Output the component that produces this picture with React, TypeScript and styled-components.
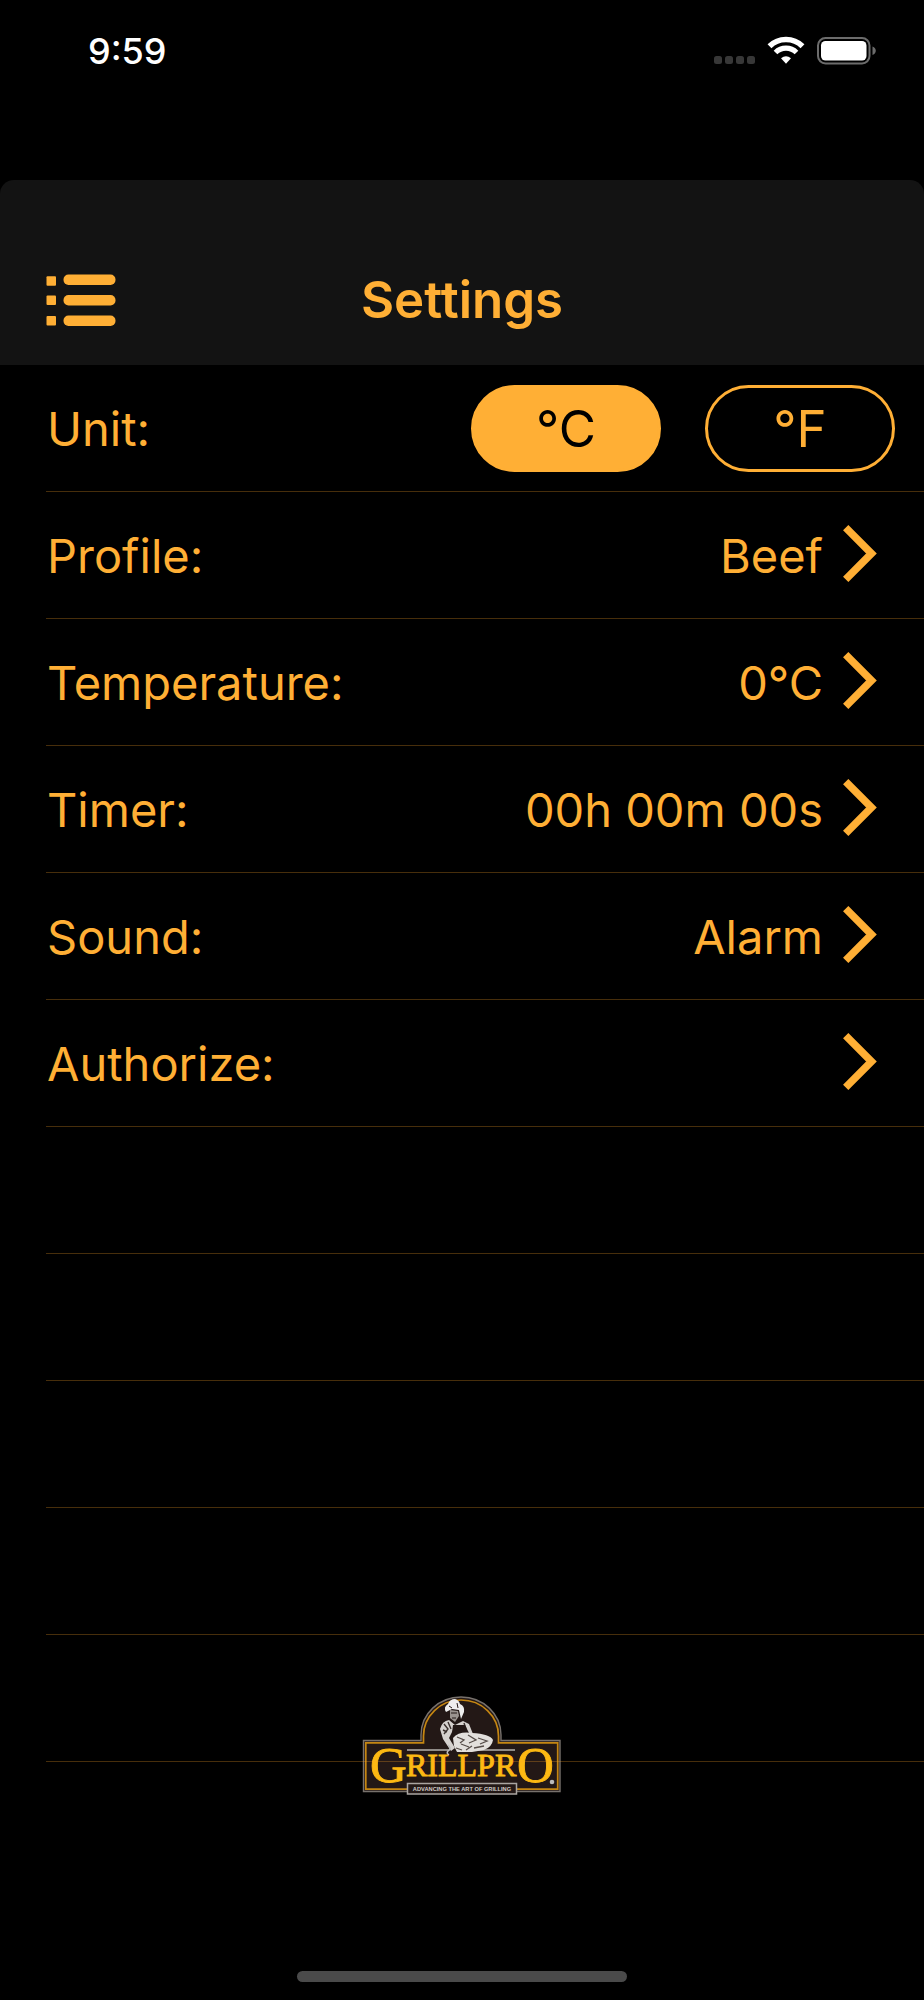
import React, { useState } from "react";
import styled, { createGlobalStyle } from "styled-components";

const amber = "#ffaf35";
const line = "rgba(255, 165, 40, 0.28)";

const GlobalStyle = createGlobalStyle`
  * { box-sizing: border-box; }
  body { margin: 0; background: #000; }
  button { font: inherit; color: inherit; background: none; border: 0; padding: 0; cursor: pointer; }
`;

const Page = styled.div`
  position: relative;
  display: flex;
  flex-direction: column;
  min-height: 100vh;
  background: #000;
  color: ${amber};
  font-family: Inter, "Liberation Sans", sans-serif;
  font-size: 47px;
`;

const StatusBar = styled.div`
  display: flex;
  justify-content: space-between;
  align-items: flex-start;
  height: 180px;
  padding: 28px 46px 0 88px;
  color: #fff;
`;

const Clock = styled.time`
  font-size: 36px;
  line-height: 46px;
  font-weight: 500;
`;

const StatusIcons = styled.div`
  display: flex;
  align-items: center;
  height: 46px;
`;

const Header = styled.header`
  display: grid;
  grid-template-columns: 1fr auto 1fr;
  align-items: center;
  height: 185px;
  padding: 55px 46px 0;
  border-radius: 14px 14px 0 0;
  background: #131313;
`;

const MenuButton = styled.button`
  justify-self: start;
  svg { display: block; }
`;

const Title = styled.h1`
  margin: 0;
  font-size: 51px;
  line-height: 64px;
  font-weight: 600;
`;

const List = styled.ul`
  position: relative;
  z-index: 1;
  margin: 0;
  padding: 0 0 0 46px;
  list-style: none;
`;

const Row = styled.li`
  display: flex;
  height: 127px;
  border-bottom: 1px solid ${line};
`;

const RowButton = styled.button`
  flex: 1;
  display: flex;
  align-items: center;
  padding: 0 47px 0 1px;
  text-align: left;
`;

const UnitRow = styled.div`
  flex: 1;
  display: flex;
  align-items: center;
  gap: 44px;
  padding: 0 29px 0 1px;
`;

const Label = styled.span`
  flex: 1;
`;

const Value = styled.span`
  margin-right: 20px;
`;

const UnitButton = styled.button<{ $on: boolean }>`
  width: 190px;
  height: 87px;
  border: 3px solid ${amber};
  border-radius: 44px;
  background: ${(p) => (p.$on ? amber : "transparent")};
  color: ${(p) => (p.$on ? "#000" : amber)};
  font-size: 51px;
`;

const LogoBox = styled.div`
  position: absolute;
  left: 0;
  right: 0;
  bottom: 204px;
  display: flex;
  justify-content: center;
`;

const Footer = styled.footer`
  flex: 1;
  display: flex;
  justify-content: center;
  align-items: flex-end;
  padding: 60px 0 18px;
`;

const HomeBar = styled.div`
  width: 330px;
  height: 11px;
  border-radius: 6px;
  background: #4a4a4a;
`;

const StatusGlyphs = () => (
  <svg width="164" height="30" viewBox="0 0 164 30" aria-hidden="true">
    {[0, 11, 22, 33].map((x) => (
      <rect key={x} x={x} y="20" width="8" height="8" rx="2.500" fill="#373737" />
    ))}
    <g fill="none" stroke="#fff">
      <path d="M55.500 10.300 A23.500 23.500 0 0 1 88.500 10.300" strokeWidth="5.500" />
      <path d="M61.500 16.500 A15 15 0 0 1 82.500 16.500" strokeWidth="5.200" />
    </g>
    <path d="M67 22.200 Q72 18.300 77 22.200 L72 27.700 Z" fill="#fff" />
    <rect x="104" y="2" width="51.500" height="25.500" rx="7.500" fill="none" stroke="#6c6c6c" strokeWidth="2" />
    <rect x="107" y="5" width="45.500" height="19.500" rx="4.500" fill="#fff" />
    <path d="M158.500 10.500 Q161.800 12 161.800 14.800 Q161.800 17.600 158.500 19 Z" fill="#6c6c6c" />
  </svg>
);

const MenuGlyph = () => (
  <svg width="70" height="52" viewBox="0 0 70 52" fill={amber} aria-hidden="true">
    <rect x="0.500" y="2.200" width="9.500" height="9.500" rx="1" />
    <rect x="0.500" y="21.500" width="9.500" height="9.500" rx="1" />
    <rect x="0.500" y="42" width="9.500" height="9.500" rx="1" />
    <rect x="17.500" y="0.500" width="52" height="10.500" rx="5" />
    <rect x="17.500" y="21" width="52" height="10.500" rx="5" />
    <rect x="17.500" y="41.500" width="52" height="10.500" rx="5" />
  </svg>
);

const Chevron = () => (
  <svg width="34" height="61" viewBox="0 0 34 61" aria-hidden="true">
    <path d="M2.700 2.700 L28.500 28.500 L2.700 54.300" fill="none" stroke={amber} strokeWidth="7.500" />
  </svg>
);

const Logo = () => (
  <svg width="200" height="100" viewBox="0 0 200 100" role="img" aria-label="GrillPro">
    <path
      d="M1.500 44.500 H59 V39 A40 38 0 0 1 139 39 V44.500 H198 V95.500 H1.500 Z"
      fill="#231816"
      stroke="#77716c"
      strokeWidth="1.400"
    />
    <path
      d="M3.800 46.800 H61.500 V40 A37.500 36 0 0 1 136.500 40 V46.800 H195.700 V93.200 H3.800 Z"
      fill="none"
      stroke="#c58612"
      strokeWidth="1.700"
    />
    <path d="M45 54 H87 M110 54 H153" stroke="#b5b1ad" strokeWidth="1.600" />
    <g>
      <path d="M84 16 Q81 11 86 8 Q88 3 93 3 Q97 4 98 8 Q103 10 102 16 L99 23 L97 14 L90 13 Z" fill="#eee" />
      <path d="M88 14 L96 15 L97 20 L93 26 L88 22 Z" fill="#9a938f" />
      <path d="M89 17 H95 M90 22 H94 M87 10 L90 12 M95 7 L96 12" stroke="#231816" strokeWidth="1" />
      <path d="M87 24 L93 29 L101 25 L107 28 L111 38 L107 40 L100 34 L91 34 L87 42 L93 52 L89 55 L81 43 L78 33 Q80 25 87 24 Z" fill="#d5d1ce" />
      <path d="M82 28 L86 33 L82 38 M86 26 L89 33 M102 27 L104 33 M81 34 L85 36" fill="none" stroke="#3a302d" strokeWidth="1.400" />
      <path d="M91 29 L103 29 L107 37 L92 44 L90 37 Z" fill="#231816" />
      <path d="M91 42 Q97 35 110 37 Q128 38 131 44 Q130 51 122 54 L110 56 L95 56 L92 50 Z" fill="#e2dfdc" />
      <path d="M95 41 L102 44 L98 47 M106 39 L114 44 L107 47 M99 48 L107 51 M116 42 L125 45 L118 48 M112 52 L122 50 M94 52 L100 54 M104 54 L110 50" fill="none" stroke="#554c48" strokeWidth="1.300" />
      <path d="M86 49 Q90 53 86 55 Q84 57 87 59" fill="none" stroke="#bbb" strokeWidth="1.500" />
    </g>
    <g fill="#fdb913" stroke="#fdb913" strokeWidth="0.900" fontFamily='"Liberation Serif", serif'>
      <text x="8" y="86" fontSize="51">G</text>
      <text x="44" y="80" fontSize="32">RILLPR</text>
      <text x="155" y="86" fontSize="51">O</text>
    </g>
    <circle cx="190" cy="86" r="2.300" fill="#bbb" />
    <rect x="45.500" y="87.500" width="109" height="10.500" fill="#231816" stroke="#aaa5a1" strokeWidth="1.500" />
    <text x="100" y="94.800" fontSize="5.700" fontWeight="700" textAnchor="middle" fill="#d0ccc8" fontFamily='"Liberation Sans", sans-serif'>
      ADVANCING THE ART OF GRILLING
    </text>
  </svg>
);

const settings = [
  { label: "Profile:", value: "Beef" },
  { label: "Temperature:", value: "0°C" },
  { label: "Timer:", value: "00h 00m 00s" },
  { label: "Sound:", value: "Alarm" },
  { label: "Authorize:", value: "" },
];

const units = ["°C", "°F"];

export default function App() {
  const [unit, setUnit] = useState("°C");
  return (
    <Page>
      <GlobalStyle />
      <StatusBar>
        <Clock>9:59</Clock>
        <StatusIcons>
          <StatusGlyphs />
        </StatusIcons>
      </StatusBar>
      <Header>
        <MenuButton aria-label="Menu">
          <MenuGlyph />
        </MenuButton>
        <Title>Settings</Title>
      </Header>
      <List>
        <Row>
          <UnitRow role="group" aria-labelledby="unit-label">
            <Label id="unit-label">Unit:</Label>
            {units.map((u) => (
              <UnitButton key={u} $on={u === unit} aria-pressed={u === unit} onClick={() => setUnit(u)}>
                {u}
              </UnitButton>
            ))}
          </UnitRow>
        </Row>
        {settings.map((s) => (
          <Row key={s.label}>
            <RowButton>
              <Label>{s.label}</Label>
              <Value>{s.value}</Value>
              <Chevron />
            </RowButton>
          </Row>
        ))}
        {[1, 2, 3, 4, 5].map((n) => (
          <Row key={n} aria-hidden="true" />
        ))}
      </List>
      <LogoBox>
        <Logo />
      </LogoBox>
      <Footer>
        <HomeBar />
      </Footer>
    </Page>
  );
}
